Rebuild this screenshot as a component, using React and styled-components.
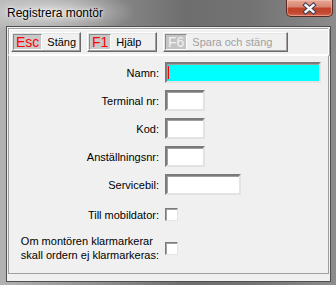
import React from 'react';
import styled, { createGlobalStyle } from 'styled-components';

const GlobalStyle = createGlobalStyle`
  html, body {
    margin: 0;
    padding: 0;
    background: #7a7a7a;
  }
  body {
    font-family: "Liberation Sans", Arial, sans-serif;
  }
`;

const App = () => {
  return (
    <>
      <GlobalStyle />
      <Window>
        <TitleBar>
          <Title>Registrera montör</Title>
          <CloseButton>
            <svg width="47" height="17" viewBox="0 0 47 17">
              <path d="M20 5 L28 12 M28 5 L20 12" stroke="#3c3f55" strokeWidth="4.6" strokeLinecap="square" fill="none" />
              <path d="M20 5 L28 12 M28 5 L20 12" stroke="#ffffff" strokeWidth="2.4" strokeLinecap="square" fill="none" />
            </svg>
          </CloseButton>
        </TitleBar>
        <Client>
          <Toolbar>
            <ToolButton $width={70}>
              <KeyBox>Esc</KeyBox>
              <ButtonLabel>Stäng</ButtonLabel>
            </ToolButton>
            <ToolButton $width={70}>
              <KeyBox>F1</KeyBox>
              <ButtonLabel>Hjälp</ButtonLabel>
            </ToolButton>
            <ToolButton $width={125} $disabled>
              <KeyBox $disabled>F6</KeyBox>
              <ButtonLabel $disabled>Spara och stäng</ButtonLabel>
            </ToolButton>
          </Toolbar>
          <FormPanel>
            <Row>
              <Label>Namn:</Label>
              <Field $width={156} $active>
                <Caret />
              </Field>
            </Row>
            <Row>
              <Label>Terminal nr:</Label>
              <Field $width={40} />
            </Row>
            <Row>
              <Label>Kod:</Label>
              <Field $width={40} />
            </Row>
            <Row>
              <Label>Anställningsnr:</Label>
              <Field $width={40} />
            </Row>
            <Row>
              <Label>Servicebil:</Label>
              <Field $width={76} />
            </Row>
            <Row $top={2}>
              <Label>Till mobildator:</Label>
              <Check />
            </Row>
            <Row $top={2}>
              <Label>
                Om montören klarmarkerar
                <br />
                skall ordern ej klarmarkeras:
              </Label>
              <Check />
            </Row>
          </FormPanel>
        </Client>
      </Window>
    </>
  );
};

const Window = styled.div`
  width: 336px;
  height: 285px;
  display: flex;
  flex-direction: column;
  overflow: hidden;
  background:
    radial-gradient(ellipse 85px 22px at 50px 12px, rgba(235, 235, 235, 0.75), rgba(235, 235, 235, 0) 100%),
    linear-gradient(90deg, #b2b2b2 0%, #8e8e8e 30%, #6e6e6e 55%, #737373 75%, #8c8c8c 100%);
`;

const TitleBar = styled.div`
  height: 26px;
  display: flex;
  align-items: flex-start;
  flex-shrink: 0;
`;

const Title = styled.div`
  padding-left: 7px;
  line-height: 26px;
  font-size: 12px;
  color: #000;
  text-shadow: 0 0 6px rgba(255, 255, 255, 0.9), 0 0 3px rgba(255, 255, 255, 0.8);
`;

const CloseButton = styled.div`
  margin-left: auto;
  margin-right: 3px;
  width: 47px;
  height: 17px;
  box-sizing: border-box;
  border: 1px solid #5b2a22;
  border-top: none;
  border-radius: 0 0 5px 5px;
  background: linear-gradient(#e7a796 0%, #d98572 42%, #c1442a 52%, #c3482f 78%, #d56a52 100%);
  box-shadow: inset 0 0 0 1px rgba(255, 210, 200, 0.45);
  display: flex;

  svg {
    margin-left: -1px;
  }
`;

const Client = styled.div`
  flex: 1;
  margin: 0 5px 3px 6px;
  border: 1px solid #4f4f4f;
  background: #f0f0f0;
  display: flex;
  flex-direction: column;
  padding: 1px 1px 7px 1px;
`;

const Toolbar = styled.div`
  height: 27px;
  box-sizing: border-box;
  border: 1px solid;
  border-color: #a0a0a0 #ffffff #ffffff #a0a0a0;
  box-shadow: inset 1px 1px 0 #ffffff, 1px 1px 0 #a0a0a0;
  display: flex;
  align-items: flex-start;
  gap: 6px;
  padding: 3px 2px 0 2px;
`;

const ToolButton = styled.div`
  width: ${p => p.$width}px;
  height: 20px;
  box-sizing: border-box;
  border: 1px solid;
  border-color: #ffffff #696969 #696969 #ffffff;
  box-shadow: inset -1px -1px 0 #a0a0a0, inset 1px 1px 0 #e3e3e3;
  background: #f0f0f0;
  display: flex;
  align-items: center;
  gap: 5px;
  padding: 0 1px;
`;

const KeyBox = styled.div`
  height: 16px;
  box-sizing: border-box;
  padding: 0 2px;
  border: 1px solid;
  border-color: #8a8a8a #ffffff #ffffff #8a8a8a;
  background: ${p => (p.$disabled ? '#c4c4c4' : '#c8c8c8')};
  color: ${p => (p.$disabled ? '#f2f2f2' : '#ff0000')};
  font-size: 14px;
  line-height: 14px;
  display: flex;
  align-items: center;
`;

const ButtonLabel = styled.span`
  font-size: 11px;
  color: ${p => (p.$disabled ? '#a0a0a0' : '#000')};
`;

const FormPanel = styled.div`
  flex: 1;
  border: 1px solid #a0a0a0;
  border-top-color: #ffffff;
  display: flex;
  flex-direction: column;
  gap: 7px;
  padding-top: 6px;
`;

const Row = styled.div`
  display: flex;
  align-items: center;
  gap: 6px;
  min-height: 21px;
  margin-top: ${p => p.$top || 0}px;
`;

const Label = styled.div`
  width: 150px;
  flex-shrink: 0;
  display: flex;
  justify-content: flex-end;
  font-size: 11px;
  line-height: 14px;
  color: #000;
  white-space: nowrap;
  text-align: left;
`;

const Field = styled.div`
  width: ${p => p.$width}px;
  height: 21px;
  box-sizing: border-box;
  border: 2px solid;
  border-color: #7a7a7a #e3e3e3 #e3e3e3 #7a7a7a;
  box-shadow: inset 1px 1px 0 #a0a0a0;
  background: ${p => (p.$active ? '#00ffff' : '#ffffff')};
  display: flex;
  align-items: center;
  padding-left: 1px;
`;

const Caret = styled.span`
  width: 1px;
  height: 13px;
  background: #ff0000;
`;

const Check = styled.div`
  width: 13px;
  height: 13px;
  box-sizing: border-box;
  border: 1px solid;
  border-color: #7a7a7a #e3e3e3 #e3e3e3 #7a7a7a;
  box-shadow: inset 1px 1px 0 #a0a0a0;
  background: #ffffff;
`;

export default App;
